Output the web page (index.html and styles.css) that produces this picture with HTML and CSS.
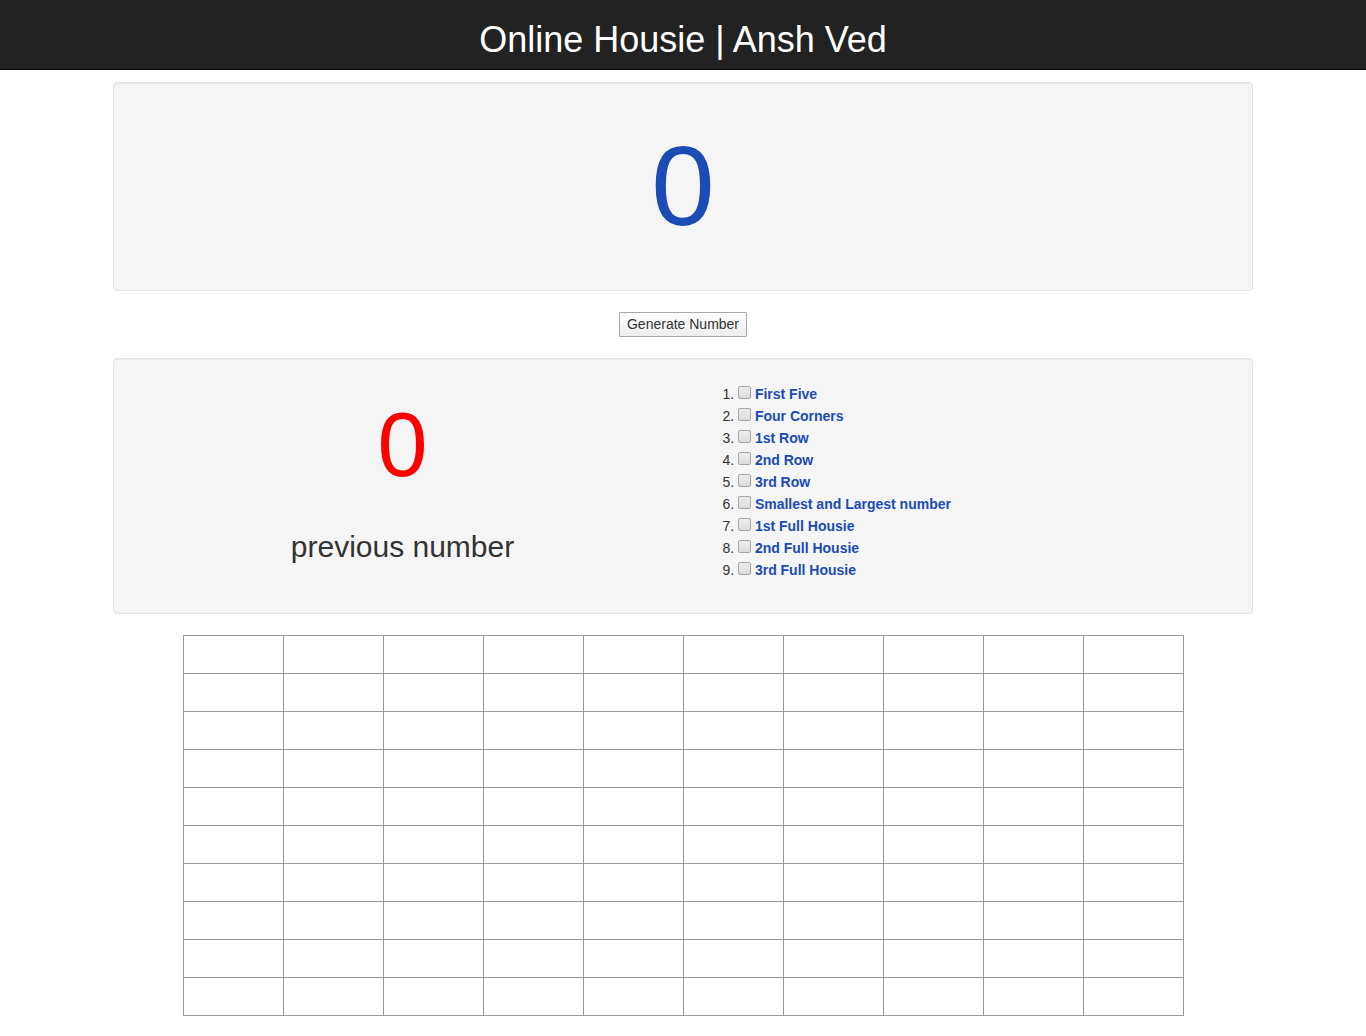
FILE: index.html
```html
<!DOCTYPE html>
<html>
<head>
<meta charset="utf-8">
<title>Online Housie | Ansh Ved</title>
<link rel="stylesheet" href="styles.css">
</head>
<body>
<header class="topbar">
  <h1 class="title">Online Housie | Ansh Ved</h1>
</header>
<main class="container">
  <section class="well well-current">
    <h1 class="current">0</h1>
  </section>
  <div class="actions">
    <button class="btn" type="button">Generate Number</button>
  </div>
  <section class="well well-info">
    <div class="col col-prev">
      <h1 class="prev">0</h1>
      <h2 class="prev-label">previous number</h2>
    </div>
    <div class="col col-prizes">
      <ol class="prizes">
        <li><input type="checkbox" class="chk"> <label>First Five</label></li>
        <li><input type="checkbox" class="chk"> <label>Four Corners</label></li>
        <li><input type="checkbox" class="chk"> <label>1st Row</label></li>
        <li><input type="checkbox" class="chk"> <label>2nd Row</label></li>
        <li><input type="checkbox" class="chk"> <label>3rd Row</label></li>
        <li><input type="checkbox" class="chk"> <label>Smallest and Largest number</label></li>
        <li><input type="checkbox" class="chk"> <label>1st Full Housie</label></li>
        <li><input type="checkbox" class="chk"> <label>2nd Full Housie</label></li>
        <li><input type="checkbox" class="chk"> <label>3rd Full Housie</label></li>
      </ol>
    </div>
  </section>
  <table class="board">
    <tbody>
      <tr><td></td><td></td><td></td><td></td><td></td><td></td><td></td><td></td><td></td><td></td></tr>
      <tr><td></td><td></td><td></td><td></td><td></td><td></td><td></td><td></td><td></td><td></td></tr>
      <tr><td></td><td></td><td></td><td></td><td></td><td></td><td></td><td></td><td></td><td></td></tr>
      <tr><td></td><td></td><td></td><td></td><td></td><td></td><td></td><td></td><td></td><td></td></tr>
      <tr><td></td><td></td><td></td><td></td><td></td><td></td><td></td><td></td><td></td><td></td></tr>
      <tr><td></td><td></td><td></td><td></td><td></td><td></td><td></td><td></td><td></td><td></td></tr>
      <tr><td></td><td></td><td></td><td></td><td></td><td></td><td></td><td></td><td></td><td></td></tr>
      <tr><td></td><td></td><td></td><td></td><td></td><td></td><td></td><td></td><td></td><td></td></tr>
      <tr><td></td><td></td><td></td><td></td><td></td><td></td><td></td><td></td><td></td><td></td></tr>
      <tr><td></td><td></td><td></td><td></td><td></td><td></td><td></td><td></td><td></td><td></td></tr>
    </tbody>
  </table>
</main>
</body>
</html>
```
FILE: styles.css
```css
* { box-sizing: border-box; }
html, body {
  margin: 0;
  padding: 0;
  background: #fff;
  font-family: "Liberation Sans", Arial, Helvetica, sans-serif;
  font-size: 14px;
  line-height: 1.42857;
  color: #333;
}
.topbar {
  background: #222;
  border-bottom: 1px solid #0a0a0a;
  padding: 20px 0 9px;
  text-align: center;
}
.title {
  margin: 0;
  font-size: 36px;
  line-height: 40px;
  font-weight: 400;
  color: #fff;
}
.container {
  width: 1140px;
  margin: 0 auto;
}
.well {
  background: #f5f5f5;
  border: 1px solid #e3e3e3;
  border-radius: 4px;
  box-shadow: inset 0 1px 1px rgba(0,0,0,0.05);
  padding: 19px;
}
.well-current {
  margin-top: 12px;
  text-align: center;
}
.current {
  margin: 21px 0 23px;
  font-size: 114px;
  line-height: 125px;
  font-weight: 400;
  color: #1b4bb4;
}
.actions {
  text-align: center;
  padding: 21px 0;
  line-height: 0;
}
.btn {
  font-family: "Liberation Sans", Arial, sans-serif;
  font-size: 14px;
  line-height: 15px;
  height: 25px;
  padding: 4px 7px;
  color: #333;
  border: 1px solid #a9a9a9;
  border-radius: 1px;
  background: linear-gradient(#fefefe, #ededed);
}
.well-info {
  display: flex;
  padding-bottom: 19px;
}
.col {
  flex: 1 1 0;
}
.col-prev {
  text-align: center;
  padding-left: 2px;
}
.prev {
  margin: 18px 0 0;
  font-size: 90px;
  line-height: 1.1;
  font-weight: 400;
  color: #ff0000;
}
.prev-label {
  margin: 35px 0 0;
  font-size: 30px;
  line-height: 33px;
  font-weight: 400;
  color: #333;
}
.col-prizes {
  padding-left: 28px;
}
.prizes {
  margin: 5px 0 13px;
  padding-left: 40px;
}
.prizes li {
  height: 22px;
  line-height: 22px;
  font-size: 14px;
  color: #333;
}
.chk {
  -webkit-appearance: none;
  appearance: none;
  display: inline-block;
  margin: 0;
  width: 13px;
  height: 13px;
  vertical-align: 0;
  border: 1px solid #a6a6a6;
  border-radius: 2px;
  background: linear-gradient(#ededed, #dcdcdc);
}
.prizes label {
  font-weight: 700;
  color: #1b4bb4;
}
.board {
  margin: 21px auto 0;
  border-collapse: collapse;
}
.board td {
  width: 100px;
  height: 38px;
  border: 1px solid #999;
  padding: 0;
}
```
